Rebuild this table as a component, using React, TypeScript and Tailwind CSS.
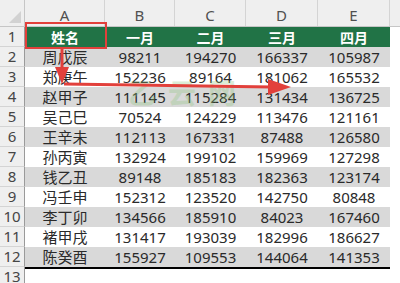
const COLS = [
  { key: 'A', w: 'w-[80px]' },
  { key: 'B', w: 'w-[70px]' },
  { key: 'C', w: 'w-[71px]' },
  { key: 'D', w: 'w-[72px]' },
  { key: 'E', w: 'w-[72px]' },
];

const HEAD = ['姓名', '一月', '二月', '三月', '四月'];

const ROWS: [string, number, number, number, number][] = [
  ['周戊辰', 98211, 194270, 166337, 105987],
  ['郑庚午', 152236, 89164, 181062, 165532],
  ['赵甲子', 111145, 115284, 131434, 136725],
  ['吴己巳', 70524, 124229, 113476, 121161],
  ['王辛未', 112113, 167331, 87488, 126580],
  ['孙丙寅', 132924, 199102, 159969, 127298],
  ['钱乙丑', 89148, 185183, 182363, 123174],
  ['冯壬申', 152312, 123520, 142750, 80848],
  ['李丁卯', 134566, 185910, 84023, 167460],
  ['褚甲戌', 131417, 193039, 182996, 186627],
  ['陈癸酉', 155927, 109553, 144064, 141353],
];

const font = "font-['Noto_Sans','Noto_Sans_CJK_SC',sans-serif]";

export default function App() {
  return (
    <div className={`relative w-[400px] h-[283px] overflow-hidden bg-white ${font}`}>
      {/* column letters */}
      <div className="flex h-[27px] bg-[#efefef] border-b border-[#c6c6c6]">
        <div className="relative w-[25px] border-r border-[#c6c6c6]">
          <div className="absolute right-[3px] bottom-[3px] w-0 h-0 border-l-[12px] border-l-transparent border-b-[12px] border-b-[#d2d2d2]" />
        </div>
        {COLS.map((c) => (
          <div
            key={c.key}
            className={`${c.w} flex items-end justify-center pb-[1px] border-r border-[#d4d4d4] text-[15px] leading-[20px] text-[#505050]`}
          >
            {c.key}
          </div>
        ))}
        <div className="flex-1" />
      </div>

      {/* header row */}
      <div className="flex h-[20px]">
        <div className="w-[25px] flex items-center justify-center bg-[#efefef] border-r border-[#9a9a9a] border-b border-b-[#d4d4d4] text-[15px] text-[#454545]">
          1
        </div>
        {HEAD.map((h, i) => (
          <div
            key={h}
            className={`${COLS[i].w} flex items-center justify-center bg-[#217346] text-white font-bold text-[14px]`}
          >
            {h}
          </div>
        ))}
        <div className="flex-1" />
      </div>

      {/* data */}
      {ROWS.map((r, ri) => {
        const shade = ri % 2 === 0 ? 'bg-[#d9d9d9]' : 'bg-white';
        return (
          <div key={r[0]} className="flex h-[20px]">
            <div className="w-[25px] flex items-center justify-center bg-[#efefef] border-r border-[#9a9a9a] border-b border-b-[#d4d4d4] text-[15px] text-[#454545]">
              {ri + 2}
            </div>
            {r.map((v, ci) => (
              <div
                key={ci}
                className={`${COLS[ci].w} ${shade} flex items-center justify-center text-[15px] text-[#2a2a2a]`}
              >
                {v}
              </div>
            ))}
            <div className="flex-1" />
          </div>
        );
      })}

      {/* bottom border + row 13 */}
      <div className="flex h-[16px]">
        <div className="w-[25px] flex items-start justify-center bg-[#efefef] border-r border-[#9a9a9a] text-[15px] leading-[18px] text-[#454545]">
          13
        </div>
        <div className="w-[365px] h-[2px] bg-black" />
      </div>

      {/* watermark */}
      <div className="absolute left-[128px] top-[79px] text-[28px] font-bold leading-none text-[#8cc47a] opacity-30 tracking-[12px] pointer-events-none">
        乙云网
      </div>

      {/* red box around A1 */}
      <div className="absolute left-[25px] top-[22px] w-[82px] h-[27px] border-2 border-[#e2403b]" />

      {/* arrows */}
      <svg className="absolute left-0 top-0" width="400" height="283">
        <line x1="62" y1="49" x2="62" y2="70" stroke="#e2403b" strokeWidth="3" />
        <polygon points="55,67 69,67 62,84" fill="#e2403b" />
        <line x1="64" y1="84" x2="272" y2="87" stroke="#e2403b" strokeWidth="3" />
        <polygon points="268,79 268,95 291,87" fill="#e2403b" />
      </svg>
    </div>
  );
}
